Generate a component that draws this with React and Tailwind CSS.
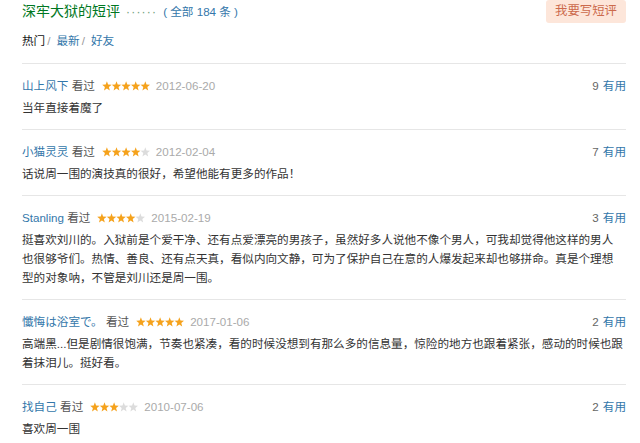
import React from 'react';

const reviews = [
  { user: '山上风下', stars: 5, date: '2012-06-20', votes: 9, text: '当年直接着魔了' },
  { user: '小猫灵灵', stars: 4, date: '2012-02-04', votes: 7, text: '话说周一围的演技真的很好，希望他能有更多的作品！' },
  {
    user: 'Stanling', stars: 4, date: '2015-02-19', votes: 3,
    text: '挺喜欢刘川的。入狱前是个爱干净、还有点爱漂亮的男孩子，虽然好多人说他不像个男人，可我却觉得他这样的男人也很够爷们。热情、善良、还有点天真，看似内向文静，可为了保护自己在意的人爆发起来却也够拼命。真是个理想型的对象呐，不管是刘川还是周一围。',
  },
  {
    user: '懺悔は浴室で。', stars: 5, date: '2017-01-06', votes: 2,
    text: '高端黑...但是剧情很饱满，节奏也紧凑，看的时候没想到有那么多的信息量，惊险的地方也跟着紧张，感动的时候也跟着抹泪儿。挺好看。',
  },
  { user: '找自己', stars: 3, date: '2010-07-06', votes: 2, text: '喜欢周一围' },
];

function Stars({ n }) {
  const pts = '4.9,0.2 6.1,3.5 9.6,3.7 6.9,5.9 7.8,9.4 4.9,7.5 2,9.4 2.9,5.9 0.2,3.7 3.7,3.5';
  return (
    <svg width="48" height="10" viewBox="0 0 48 10" className="shrink-0">
      {[0, 1, 2, 3, 4].map((i) => (
        <polygon key={i} points={pts} transform={`translate(${i * 9.6} 0)`} fill={i < n ? '#f5a21c' : '#dcdcdc'} />
      ))}
    </svg>
  );
}

function Review({ r }) {
  return (
    <div className="border-t border-[#e6e6e6] pt-3 pb-3">
      <div className="flex h-5 items-center justify-between leading-5">
        <div className="flex items-center">
          <span className="text-[#3377aa] whitespace-pre">{r.user} </span>
          <span className="text-[#555] mr-[7px]">看过</span>
          <Stars n={r.stars} />
          <span className="ml-[6px] text-[#aaaaaa]">{r.date}</span>
        </div>
        <div>
          <span className="text-[#666]">{r.votes}</span>
          <span className="ml-1 text-[#3377aa]">有用</span>
        </div>
      </div>
      <p className="mt-[2px] w-[602px] text-[11.6px] leading-[19px] text-[#333]">{r.text}</p>
    </div>
  );
}

export default function App() {
  return (
    <div className="bg-white w-[640px] h-[443px] overflow-hidden pl-[22px] pr-[14px] text-[11.6px] text-[#333]" style={{ fontFamily: '"Liberation Sans", Arial, "Noto Sans CJK SC", sans-serif' }}>
      <div className="flex h-[23px] items-center justify-between">
        <div className="flex items-center">
          <span className="text-[14px] text-[#007722]">深牢大狱的短评</span>
          <span className="ml-[6px] text-[#6f9e7a] text-[12px] tracking-[1.2px]">······</span>
          <span className="ml-[6px] text-[#3377aa] text-[11.6px]">( 全部 184 条 )</span>
        </div>
        <button className="h-[23px] w-[80px] rounded-[3px] bg-[#fde6da] text-[12.4px] text-[#cc6a4c]">我要写短评</button>
      </div>
      <div className="mt-[8px] flex h-5 items-center leading-5">
        <span className="text-[#111]">热门</span>
        <span className="text-[#999] ml-[2px] mr-[6px]">/</span>
        <span className="text-[#3377aa]">最新</span>
        <span className="text-[#999] ml-[2px] mr-[6px]">/</span>
        <span className="text-[#3377aa]">好友</span>
      </div>
      <div className="mt-3">
        {reviews.map((r, i) => <Review key={i} r={r} />)}
      </div>
    </div>
  );
}
